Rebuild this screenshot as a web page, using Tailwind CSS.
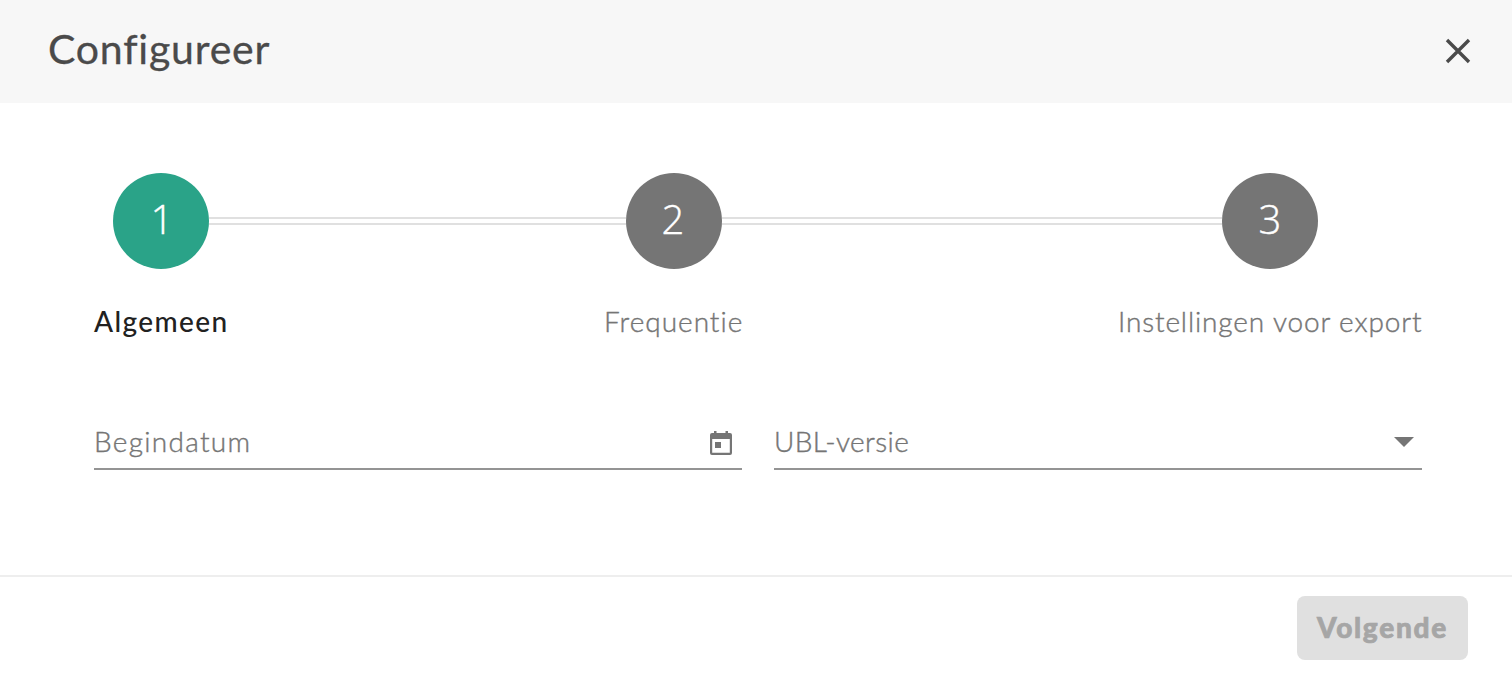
<!DOCTYPE html>
<html lang="nl">
<head>
  <meta charset="UTF-8">
  <meta name="viewport" content="width=device-width, initial-scale=1.0">
  <title>Configureer</title>
  <script src="https://cdn.jsdelivr.net/npm/@tailwindcss/browser@4"></script>
</head>
<body class="bg-white font-['Lato',sans-serif] text-[28px] leading-8 text-[#757575]">
  <div class="flex h-[674px] w-[1512px] flex-col overflow-hidden">
    <header class="flex h-[103px] items-center justify-between bg-[#f7f7f7] pr-[42px] pl-12">
      <h1 class="pb-1.5 text-[41px] leading-[48px] tracking-[0.8px] whitespace-nowrap text-[#4a4a4a] [-webkit-text-stroke:0.3px]">Configureer</h1>
      <button type="button" aria-label="Sluiten" class="pb-0.5">
        <svg class="block size-6" viewBox="0 0 24 24" fill="none" stroke="#4a4a4a" stroke-width="3.4" overflow="visible"><path d="M1 1l22 22M23 1l-22 22"/></svg>
      </button>
    </header>

    <main class="h-[472px] pt-[70px] pr-[90px] pl-[94px]">
      <!-- Stappen -->
      <div class="flex items-center pr-[104px] pl-[19px] font-['Open_Sans',sans-serif] text-[40px] font-light text-white [-webkit-text-stroke:0.4px]">
        <div class="flex size-24 items-center justify-center rounded-full bg-[#2aa388] pb-1 pl-0.5">1</div>
        <div class="h-2 w-[417px] border-y-2 border-[#e0e0e0]"></div>
        <div class="flex size-24 items-center justify-center rounded-full bg-[#757575] pr-0.5 pb-1">2</div>
        <div class="h-2 flex-1 border-y-2 border-[#e0e0e0]"></div>
        <div class="flex size-24 items-center justify-center rounded-full bg-[#757575] pb-1">3</div>
      </div>
      <div class="mt-9 flex justify-between whitespace-nowrap">
        <span class="w-[134px] font-medium tracking-[1.4px] text-[#212121]">Algemeen</span>
        <span class="w-[138px] font-light tracking-[1px] [-webkit-text-stroke:0.4px]">Frequentie</span>
        <span class="w-[304px] font-light tracking-[0.87px] [-webkit-text-stroke:0.4px]">Instellingen voor export</span>
      </div>

      <!-- Velden -->
      <div class="mt-[83px] grid grid-cols-2 gap-8 font-light">
        <div class="flex h-[50px] items-start justify-between border-b-2 border-[#949494] pt-[5px] pr-2.5">
          <span class="tracking-[1.3px] [-webkit-text-stroke:0.4px]">Begindatum</span>
          <svg class="mt-1.5 h-6 w-[22px]" viewBox="0 0 22 24" fill="#757575"><path fill-rule="evenodd" d="M4 0h2.5v2h9V0H18v2h2a2 2 0 0 1 2 2v18a2 2 0 0 1-2 2H2a2 2 0 0 1-2-2V4a2 2 0 0 1 2-2h2zM2.2 8v13.8h17.6V8zM5 11h6v6H5z"/></svg>
        </div>
        <div class="flex h-[50px] items-start justify-between border-b-2 border-[#949494] pt-[5px] pr-2">
          <span class="tracking-[0.4px] [-webkit-text-stroke:0.4px]">UBL-versie</span>
          <svg class="mt-3 h-2.5 w-5" viewBox="0 0 20 10" fill="#757575"><path d="M0 0h20L10 10z"/></svg>
        </div>
      </div>
    </main>

    <footer class="flex h-[99px] items-start justify-end border-t-2 border-[#eeeeee] pt-[19px] pr-11">
      <button type="button" disabled class="h-16 w-[171px] rounded-lg bg-[#e0e0e0] pb-0.5 font-black tracking-[1.7px] text-[#a6a6a6] [-webkit-text-stroke:0.7px]">Volgende</button>
    </footer>
  </div>
</body>
</html>
